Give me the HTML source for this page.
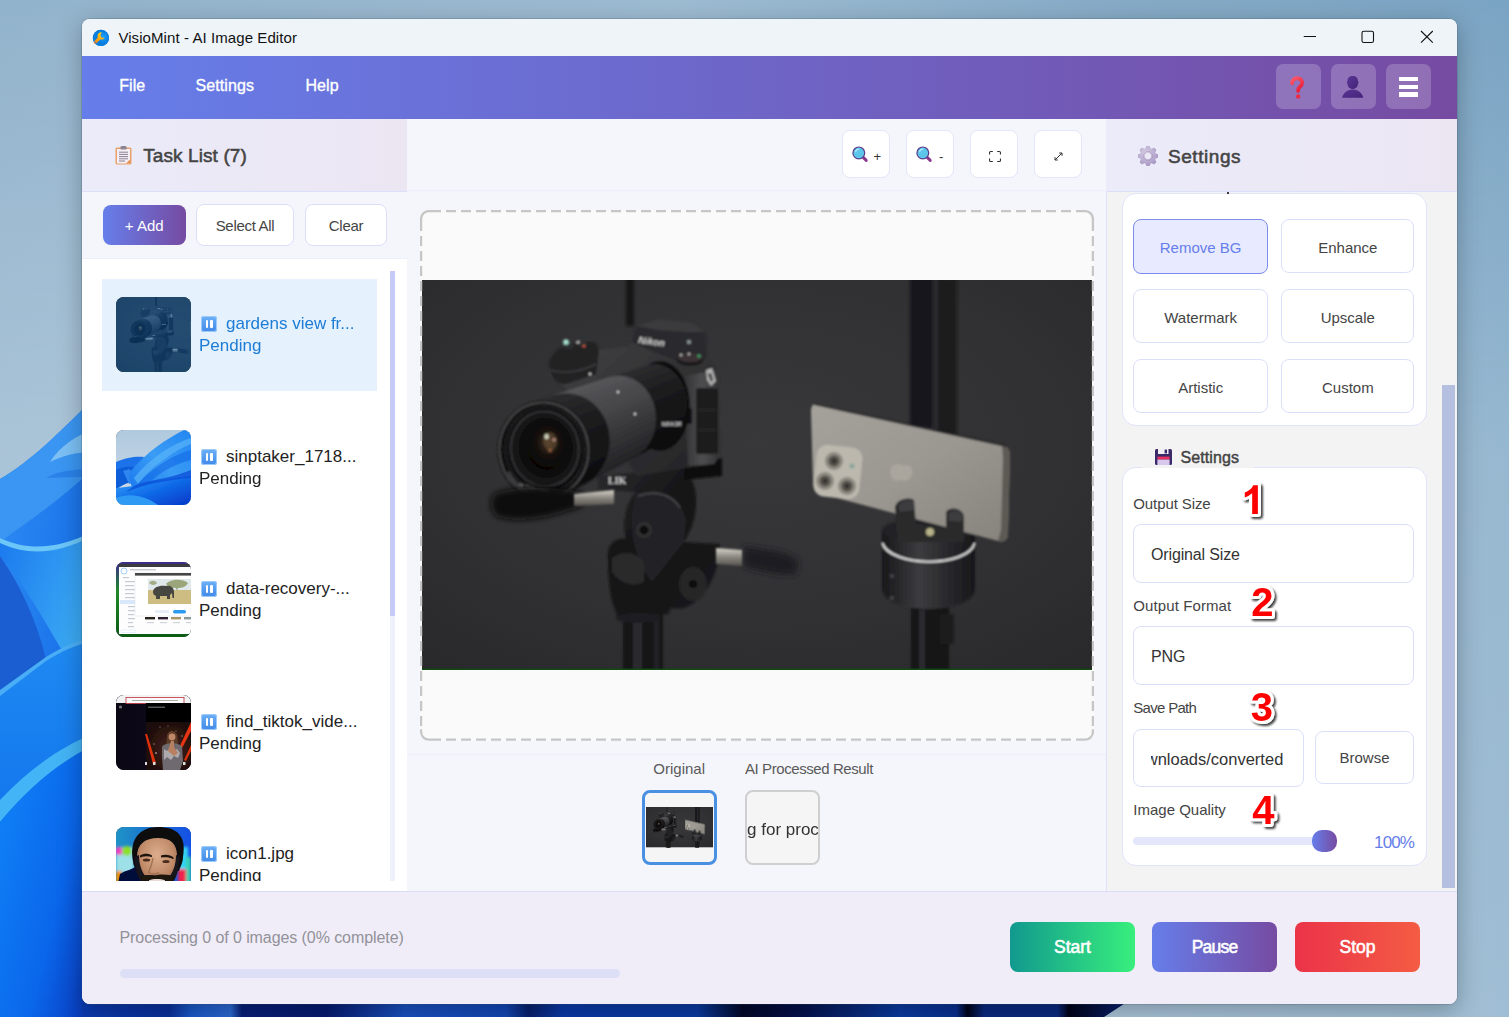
<!DOCTYPE html>
<html>
<head>
<meta charset="utf-8">
<title>VisioMint - AI Image Editor</title>
<style>
*{box-sizing:border-box;margin:0;padding:0}
html,body{width:1509px;height:1017px;overflow:hidden}
body{font-family:"Liberation Sans",sans-serif;position:relative;background:#8fb0c9;color:#222}
.abs{position:absolute}
#wall{position:absolute;left:0;top:0;width:1509px;height:1017px}
#win{position:absolute;left:82px;top:19px;width:1375px;height:985px;border-radius:8px;overflow:hidden;background:#f5f6fb;box-shadow:0 0 0 1px rgba(60,80,100,.22),0 6px 24px rgba(0,0,0,.28)}
/* coordinates inside #win are page coords minus (82,19) */
#title{position:absolute;left:0;top:0;width:1375px;height:37px;background:#eff4f9}
#title .txt{position:absolute;left:36.400px;top:10.300px;font-size:15px;line-height:17px;color:#111;white-space:nowrap;letter-spacing:0.080px}
#menu{position:absolute;left:0;top:37px;width:1375px;height:63px;background:linear-gradient(90deg,#667eea 0%,#764ba2 100%)}
#menu .mi{position:absolute;top:20.500px;font-size:16px;line-height:18px;color:#fff;white-space:nowrap;letter-spacing:0.100px;-webkit-text-stroke:0.350px #fff}
.mbtn{position:absolute;top:8px;width:45px;height:44.500px;border-radius:7px;background:rgba(255,255,255,.2)}
.hdr{position:absolute;top:100px;height:73px;background:linear-gradient(90deg,#ebebf9,#ece6f3);border-bottom:1px solid #dcdffa}
.hdr .ht{position:absolute;font-size:19px;line-height:21px;color:#444;white-space:nowrap;-webkit-text-stroke:0.550px #444}
#left{position:absolute;left:0;top:100px;width:325px;height:772px;background:#fff}
#center{position:absolute;left:325px;top:100px;width:699px;height:772px;background:#f5f6fb}
#right{position:absolute;left:1024px;top:100px;width:351px;height:772px;background:#f3f3f3}
#footer{position:absolute;left:0;top:872px;width:1375px;height:113px;background:#f0edf8;border-top:1px solid #d9dcf8}
.btn{position:absolute;border:1px solid #dcdffa;border-radius:8px;background:#fff;color:#444;font-size:15px;letter-spacing:-0.300px;text-align:center;white-space:nowrap}

#list{position:absolute;left:20px;top:152px;width:293px;height:610px;overflow:hidden}
#list .track{position:absolute;left:288px;top:0;width:5px;height:610px;background:#eef0fc}
#list .thumbbar{position:absolute;left:288px;top:0;width:5px;height:345px;background:#c5caf6}
.item{position:absolute;left:0;width:275px;height:111.5px}
.item.sel{background:#e5f1fc;color:#1c7cd6}
.item .th{position:absolute;left:14px;top:18px;width:75px;height:75px;border-radius:8px;background:#345;overflow:hidden}
.item .l1{position:absolute;left:97px;top:34px;font-size:17px;line-height:22px;white-space:nowrap;padding-left:27px}
.item .l2{position:absolute;left:97px;top:56px;font-size:17px;line-height:22px;white-space:nowrap}
.pz{position:absolute;left:2px;top:3px;width:16px;height:16px;border-radius:3px;background:linear-gradient(180deg,#6cb0f7,#4189e8);box-shadow:inset 0 0 0 1px #9ccaf9}
.pz:before,.pz:after{content:"";position:absolute;top:4px;width:2.5px;height:8px;background:#fff;border-radius:1px}
.pz:before{left:4.5px}.pz:after{left:9px}

.tb{position:absolute;top:11px;width:48px;height:48px;border:1px solid #e4e6fb;border-radius:8px;background:#fff}
.tb span{position:absolute;left:30.500px;top:17.500px;font-size:13px;color:#333;line-height:16px}
#canvas{position:absolute;left:13px;top:91px;width:674px;height:530.700px;border-radius:8.500px;background:#fafafa;overflow:hidden}
#photo{position:absolute;left:2px;top:70px;width:670px;height:390px;background:#2b2b2d}
.lab{position:absolute;font-size:15px;color:#5a5a5a;white-space:nowrap;line-height:17px}
#thA{left:235px;top:671px;width:75px;height:75px;border:3px solid #4a90e2;border-radius:8px;background:#f5f5f5;overflow:hidden}
#thB{left:338px;top:671px;width:75px;height:75px;border:2px solid #cfcfcf;border-radius:8px;background:#f5f5f5;overflow:hidden}
#thB span{position:absolute;left:-62.800px;top:26.500px;width:200px;text-align:center;font-size:17px;color:#333;white-space:nowrap;line-height:22px}
#rscroll{left:0;top:72px;width:351px;height:700px;overflow:hidden}
.gb{position:absolute;border:1px solid #e0e3fb;border-radius:14px;background:#fff}
.gt{position:absolute;height:22px;background:#f3f3f3}
.gtt{position:absolute;font-size:16px;color:#444;white-space:nowrap;line-height:18px;-webkit-text-stroke:0.450px #444;letter-spacing:0.100px}
.ob{position:absolute;width:134px;height:54px;border:1px solid #dcdffa;border-radius:8px;background:#fff;color:#444;font-size:15px;text-align:center;line-height:55px;white-space:nowrap}
.ob.sel{border:1.500px solid #7b8cec;background:#e8eaff;color:#667eea}
.fl{position:absolute;font-size:15px;color:#444;white-space:nowrap;line-height:17px}
.sel2{position:absolute;border:1px solid #dcdffa;border-radius:8px;background:#fff;overflow:hidden}
.sel2 span{position:absolute;left:17px;top:20.500px;font-size:16px;color:#333;white-space:nowrap;line-height:18px;letter-spacing:-0.150px}
.fb{position:absolute;top:30px;width:125px;height:50px;border-radius:8px;color:#fff;font-size:17.500px;letter-spacing:0;-webkit-text-stroke:0.550px #fff;text-align:center;line-height:50px}
</style>
</head>
<body>
<svg id="wall" width="1509" height="1017" viewBox="0 0 1509 1017">
  <defs>
    <linearGradient id="wg" x1="0" y1="0" x2="1" y2="0"><stop offset="0" stop-color="#92b3cc"/><stop offset="0.45" stop-color="#9dbcd2"/><stop offset="0.75" stop-color="#86abc7"/><stop offset="1" stop-color="#7aa4c3"/></linearGradient>
    <linearGradient id="wv" x1="0" y1="0" x2="0" y2="1"><stop offset="0" stop-color="#fff" stop-opacity="0"/><stop offset="0.45" stop-color="#fff" stop-opacity="0.22"/><stop offset="1" stop-color="#fff" stop-opacity="0.28"/></linearGradient>
    <linearGradient id="p1" x1="0" y1="0" x2="1" y2="1"><stop offset="0" stop-color="#2f8df5"/><stop offset="1" stop-color="#0a5fe0"/></linearGradient>
    <linearGradient id="p2" x1="0" y1="0" x2="1" y2="0.6"><stop offset="0" stop-color="#1a78ee"/><stop offset="1" stop-color="#3fb0f5"/></linearGradient>
    <linearGradient id="p3" x1="0" y1="0" x2="0" y2="1"><stop offset="0" stop-color="#1f8af2"/><stop offset="1" stop-color="#0560e8"/></linearGradient>
    <linearGradient id="p5" x1="0" y1="0.300" x2="1" y2="1"><stop offset="0" stop-color="#0f7ef5"/><stop offset="0.550" stop-color="#0a66ea"/><stop offset="0.800" stop-color="#0a4cd0"/><stop offset="1" stop-color="#0830a8"/></linearGradient>
    <linearGradient id="p4" gradientUnits="userSpaceOnUse" x1="0" y1="0" x2="1125" y2="0"><stop offset="0" stop-color="#0a84ff"/><stop offset="0.045" stop-color="#0a70f0"/><stop offset="0.071" stop-color="#0a3ab0"/><stop offset="0.150" stop-color="#0a2f9a"/><stop offset="0.170" stop-color="#1a58c8"/><stop offset="0.205" stop-color="#2a68d0"/><stop offset="0.215" stop-color="#081e78"/><stop offset="0.290" stop-color="#061a70"/><stop offset="0.360" stop-color="#1a50c0"/><stop offset="0.450" stop-color="#1246b4"/><stop offset="0.470" stop-color="#08206c"/><stop offset="0.500" stop-color="#0a3aa8"/><stop offset="0.620" stop-color="#0a3aa0"/><stop offset="0.660" stop-color="#03082a"/><stop offset="0.710" stop-color="#04104a"/><stop offset="0.800" stop-color="#0a3aa0"/><stop offset="0.850" stop-color="#0a2f90"/><stop offset="0.860" stop-color="#01031a"/><stop offset="0.875" stop-color="#0a2a80"/><stop offset="0.940" stop-color="#0a2a80"/><stop offset="0.950" stop-color="#01031a"/><stop offset="1" stop-color="#0a2070"/></linearGradient>
  </defs>
  <rect width="1509" height="1017" fill="url(#wg)"/>
  <rect width="1509" height="1017" fill="url(#wv)"/>
  <!-- bloom left -->
  <path d="M0 479 C30 462 60 432 92 400 L92 1017 L0 1017Z" fill="url(#p1)"/>
  <path d="M0 479 C30 462 60 432 92 400 L92 470 C60 500 30 520 0 542Z" fill="#3a96f2"/>
  <path d="M50 462 C60 446 76 436 92 430 L92 452 C76 452 62 456 50 462Z" fill="#7cc0f5"/>
  <path d="M46 478 C60 470 76 470 92 468 L92 478 C76 476 60 478 46 478Z" fill="#2a82ea"/>
  <path d="M0 538 C30 552 60 548 92 532 L92 700 C60 650 30 590 0 556Z" fill="url(#p2)"/>
  <path d="M0 538 C30 552 60 548 92 532 L92 536 C60 553 30 557 0 543Z" fill="#6cc6f8"/>
  <path d="M0 556 C20 584 38 624 46 660 L0 694Z" fill="#1a5ed2"/>
  <path d="M0 694 L46 660 C62 650 76 644 92 640 L92 1017 L0 1017Z" fill="url(#p3)"/>
  <path d="M0 690 L46 657 C62 647 76 641 92 637 L92 641 C76 645 62 651 46 661 L0 696Z" fill="#4aaef6"/>
  <path d="M0 800 C30 768 60 748 92 734 L92 746 C60 762 30 786 0 822Z" fill="#43b4f5"/>
  <path d="M0 822 C30 786 60 762 92 746 L92 1017 L0 1017Z" fill="url(#p5)"/>
  <!-- bottom strip -->
  <path d="M82 1000 L1130 1000 L1104 1017 L82 1017Z" fill="url(#p4)"/>
</svg>
<div id="win">
  <div id="title"><svg class="abs" style="left:10px;top:9.500px" width="18" height="18" viewBox="0 0 18 18"><defs><linearGradient id="wr" x1="0.700" y1="0" x2="0.200" y2="1"><stop offset="0" stop-color="#ffd21a"/><stop offset="0.600" stop-color="#ffa60a"/><stop offset="1" stop-color="#f57c1a"/></linearGradient><radialGradient id="ib" cx="0.650" cy="0.450" r="0.350"><stop offset="0" stop-color="#1fa2ff"/><stop offset="1" stop-color="#0a7fe0"/></radialGradient></defs><circle cx="8.900" cy="8.900" r="8.100" fill="#0a7fe0"/><circle cx="8.900" cy="8.900" r="8.100" fill="url(#ib)"/><path d="M9.400 3.200C7.300 3.200 5.500 4.900 5.500 7C5.500 7.600 5.700 8.200 5.900 8.600L2.300 12.200C1.700 12.800 1.700 13.700 2.300 14.300C2.900 14.900 3.800 14.900 4.400 14.300L8.300 10.400C8.700 10.500 9 10.600 9.400 10.600C10.800 10.600 11.900 9.900 12.400 8.900L9.700 8.600L8.400 6.600L9.800 3.300C9.700 3.200 9.500 3.200 9.400 3.200Z" fill="url(#wr)"/><circle cx="3.400" cy="13.200" r="0.800" fill="#5b7fa8"/></svg><span class="txt">VisioMint - AI Image Editor</span>
    <svg class="abs" style="left:1215px;top:5px" width="150" height="26" viewBox="0 0 150 26" fill="none" stroke="#111" stroke-width="1.100"><path d="M6.700 12.500H19"/><rect x="65" y="7.200" width="11.500" height="11.300" rx="1.800"/><path d="M124 7L135.800 18.700M135.800 7L124 18.700"/></svg></div>
  <div id="menu">
    <span class="mi" style="left:37.200px">File</span>
    <span class="mi" style="left:113.500px">Settings</span>
    <span class="mi" style="left:223.400px">Help</span>
    <div class="mbtn" style="left:1194px"><svg class="abs" style="left:13px;top:11.600px" width="17" height="23.500" viewBox="0 0 18 24" preserveAspectRatio="none"><defs><linearGradient id="qg" x1="0" y1="0" x2="0.600" y2="1"><stop offset="0" stop-color="#ff5a6a"/><stop offset="1" stop-color="#e8203c"/></linearGradient></defs><path d="M3.200 7.500C3.200 4.200 5.600 2.300 8.600 2.300C11.700 2.300 13.900 4.200 13.900 7C13.900 9.200 12.700 10.300 11.400 11.300C10.300 12.200 9.700 12.800 9.700 14.300V15.200" fill="none" stroke="url(#qg)" stroke-width="3.900" stroke-linecap="round" stroke-linejoin="round"/><circle cx="9.700" cy="21" r="2.300" fill="#ee2b45"/></svg></div>
    <div class="mbtn" style="left:1249px"><svg class="abs" style="left:10px;top:10.200px" width="24" height="24" viewBox="0 0 24 24"><defs><linearGradient id="ug" x1="0" y1="0" x2="1" y2="1"><stop offset="0" stop-color="#5a3596"/><stop offset="1" stop-color="#432478"/></linearGradient></defs><path d="M6.400 7.500C6.400 3.800 8.600 2 11.700 2C14.800 2 17 3.800 17 7.500C17.700 7.600 17.900 8.800 17 9.500C16.800 12.700 14.800 15 11.700 15C8.600 15 6.600 12.700 6.400 9.500C5.500 8.800 5.700 7.600 6.400 7.500Z" fill="url(#ug)"/><path d="M1 23.700C2.600 18.700 6.600 15.600 11.700 15.600C16.800 15.600 20.800 18.700 22.400 23.700Z" fill="url(#ug)"/></svg></div>
    <div class="mbtn" style="left:1304px"><div class="abs" style="left:13px;top:13px;width:19px;height:4.200px;background:#fff"></div><div class="abs" style="left:13px;top:20.800px;width:19px;height:4.200px;background:#fff"></div><div class="abs" style="left:13px;top:28.200px;width:19px;height:4.700px;background:#fff"></div></div>
  </div>
  <div id="left">
    <div class="hdr" style="left:0;top:0;width:325px">
      <svg class="abs" style="left:33px;top:27px" width="17" height="19" viewBox="0 0 17 19"><rect x="0.5" y="1.5" width="16" height="17" rx="1.5" fill="#e9a16c"/><rect x="2" y="3" width="13" height="14.5" fill="#f4eef6"/><path d="M15 13.5v4h-4z" fill="#e58f4e"/><rect x="5.5" y="0" width="6" height="3.6" rx="1.2" fill="#8d8492"/><path d="M4 6.2h9M4 8.4h9M4 10.6h9M4 12.8h9M4 15h6" stroke="#8a8290" stroke-width="1"/></svg>
      <span class="ht" style="left:61.200px;top:26.200px;letter-spacing:0.100px">Task List (7)</span>
    </div>
    <div class="abs" style="left:0;top:73px;width:325px;height:67px;background:#f5f6fb;border-bottom:1px solid #eceefa">
      <div class="btn" style="left:20.500px;top:13px;width:83.500px;height:40px;border:none;background:linear-gradient(90deg,#667eea,#764ba2);color:#fff;line-height:42px;letter-spacing:0">+ Add</div>
      <div class="btn" style="left:114px;top:12px;width:98px;height:42px;line-height:42px">Select All</div>
      <div class="btn" style="left:223px;top:12px;width:82px;height:42px;line-height:42px">Clear</div>
    </div>
    <div id="list">
      <div class="track"></div><div class="thumbbar"></div>
      <div class="item sel" style="top:8px"><div class="th t1"><svg width="75" height="75" viewBox="0 0 390 390"><use href="#photosvg" x="0" y="0"/><rect width="390" height="390" fill="#0869c3" opacity="0.4"/></svg></div><div class="l1"><i class="pz"></i>gardens view fr...</div><div class="l2">Pending</div></div>
      <div class="item" style="top:140.5px"><div class="th t2"><svg width="75" height="75" viewBox="0 0 75 75"><defs><linearGradient id="t2a" x1="0" y1="0" x2="0" y2="1"><stop offset="0" stop-color="#b0c9de"/><stop offset="1" stop-color="#cfdde8"/></linearGradient><linearGradient id="t2b" x1="0" y1="1" x2="1" y2="0"><stop offset="0" stop-color="#1a78ee"/><stop offset="0.5" stop-color="#3a9cf5"/><stop offset="1" stop-color="#2386f2"/></linearGradient><linearGradient id="t2c" x1="0" y1="0" x2="1" y2="1"><stop offset="0" stop-color="#3aa8f6"/><stop offset="0.45" stop-color="#1372ec"/><stop offset="1" stop-color="#0338c8"/></linearGradient><filter id="t2f"><feGaussianBlur stdDeviation="0.600"/></filter></defs>
<rect width="75" height="75" fill="url(#t2a)"/>
<g filter="url(#t2f)">
<path d="M0 32 C10 27 22 26 28 27 L20 45 L0 60Z" fill="#1a72e8"/>
<path d="M0 40 C8 36 16 36 22 38 L14 52 L0 58Z" fill="#0f5bd8"/>
<path d="M7 41 L14 39 L18 52 L13 54Z" fill="#2f86ee"/>
<path d="M14 42 C30 22 52 8 68 0 L75 0 L75 60 L20 62 C14 56 12 48 14 42Z" fill="url(#t2b)"/>
<path d="M18 48 C34 28 56 14 75 8 L75 14 C56 22 36 36 22 54Z" fill="#58b4f8" opacity="0.700"/>
<path d="M20 56 C40 34 60 24 75 20 L75 30 C58 34 40 44 26 60Z" fill="#1268e6" opacity="0.600"/>
<path d="M0 58 C20 57 40 50 75 46 L75 75 L0 75Z" fill="url(#t2c)"/>
<path d="M0 68 C14 62 30 66 42 75 L0 75Z" fill="#2f9af4"/>
<path d="M18 56 C30 50 50 50 75 40 L75 48 C50 50 30 54 10 62Z" fill="#0a50d8" opacity="0.800"/>
</g></svg></div><div class="l1"><i class="pz"></i>sinptaker_1718...</div><div class="l2">Pending</div></div>
      <div class="item" style="top:273px"><div class="th t3"><svg width="75" height="75" viewBox="0 0 75 75"><defs><linearGradient id="t3a" x1="0" y1="0" x2="0" y2="1"><stop offset="0" stop-color="#3b2a8a"/><stop offset="0.4" stop-color="#1f8a2a"/><stop offset="1" stop-color="#0c5a14"/></linearGradient><filter id="t3f"><feGaussianBlur stdDeviation="0.500"/></filter></defs>
<rect width="75" height="75" fill="url(#t3a)"/>
<g filter="url(#t3f)">
<rect x="3" y="2" width="72" height="70" fill="#fdfdfe"/>
<rect x="3" y="2" width="72" height="3" fill="#3a3a3c"/>
<circle cx="8" cy="9" r="3" fill="none" stroke="#8fc4f2" stroke-width="0.800"/>
<rect x="14" y="7" width="26" height="1.500" fill="#c9ccd2"/>
<rect x="4" y="38" width="18" height="4" fill="#d9e9fb"/>
<g fill="#c6cad2"><rect x="7" y="15" width="6" height="1.200"/><rect x="9" y="19" width="10" height="1.200"/><rect x="9" y="23" width="9" height="1.200"/><rect x="9" y="27" width="10" height="1.200"/><rect x="9" y="31" width="9" height="1.200"/><rect x="9" y="35" width="10" height="1.200"/><rect x="12" y="44" width="7" height="1.200"/><rect x="12" y="48" width="7" height="1.200"/><rect x="12" y="52" width="6" height="1.200"/><rect x="12" y="56" width="7" height="1.200"/><rect x="12" y="60" width="5" height="1.200"/><rect x="12" y="64" width="6" height="1.200"/></g>
<rect x="19" y="11" width="56" height="43" fill="#fff" stroke="#ddd" stroke-width="0.400"/>
<rect x="19" y="11" width="56" height="2.600" fill="#444446"/>
<rect x="32" y="17" width="43" height="12" fill="#dfe8ea"/>
<rect x="32" y="28" width="43" height="14" fill="#cdbd82"/>
<path d="M50 22 C54 17 66 16 72 21 C70 25 66 26 62 26 L61 29 L60 26 C56 26 52 25 50 22Z" fill="#9aa57a"/>
<path d="M33 21 C35 18 39 18 41 21 C40 23 36 24 33 21Z" fill="#a3ad84"/>
<path d="M37 30 C37 25 44 23 50 24 C55 23 58 26 58 30 L58 36 L56.500 36 L56 31 L54 33 L54 37 L51 37 L51 34 L44 34 L44 37 L40 37 L40 34 C38 33 37 32 37 30Z" fill="#45463f"/>
<rect x="29" y="55" width="10" height="2.400" fill="#2a221a"/><rect x="42" y="55" width="10" height="2.400" fill="#2d2030"/><rect x="55" y="55" width="10" height="2.400" fill="#a89868"/><rect x="68" y="55" width="7" height="2.400" fill="#8a9a98"/>
<g fill="#d0d4da"><rect x="31" y="60" width="7" height="1.200"/><rect x="44" y="60" width="7" height="1.200"/><rect x="57" y="60" width="7" height="1.200"/><rect x="70" y="60" width="5" height="1.200"/></g>
<rect x="39" y="48" width="14" height="3" fill="#e8eef8"/>
<rect x="57" y="48" width="13" height="3.400" rx="1.700" fill="#2b9bf0"/>
<rect x="5" y="68" width="15" height="2.500" rx="1" fill="#fff" stroke="#bfe0fb" stroke-width="0.400"/>
</g></svg></div><div class="l1"><i class="pz"></i>data-recovery-...</div><div class="l2">Pending</div></div>
      <div class="item" style="top:405.5px"><div class="th t4"><svg width="75" height="75" viewBox="0 0 75 75"><defs><linearGradient id="t4a" x1="0" y1="0" x2="1" y2="0"><stop offset="0" stop-color="#0b0714"/><stop offset="1" stop-color="#0d0a1e"/></linearGradient><radialGradient id="t4b" cx="0.55" cy="0.55" r="0.600"><stop offset="0" stop-color="#4a241c"/><stop offset="1" stop-color="#1c0c0a"/></radialGradient><filter id="t4f"><feGaussianBlur stdDeviation="0.600"/></filter></defs>
<rect width="75" height="75" fill="url(#t4a)"/>
<g filter="url(#t4f)">
<rect x="0" y="0" width="75" height="8" fill="#f2f2f2"/>
<rect x="10" y="2.500" width="58" height="6" fill="#fafafa" stroke="#c0303a" stroke-width="0.800"/>
<rect x="16" y="5" width="46" height="0.800" fill="#999"/>
<rect x="30" y="8" width="45" height="20" fill="#020202"/>
<rect x="32" y="11.500" width="17" height="1.500" fill="#55555a"/>
<circle cx="4.500" cy="12" r="1.600" fill="#777"/>
<rect x="30" y="27" width="45" height="48" fill="url(#t4b)"/>
<path d="M29 39 L31 39 L40 68 L37 69Z" fill="#e03010"/>
<path d="M75 27 L75 36 L65 55 L63 53Z" fill="#e83412"/>
<path d="M75 50 L75 56 L70 66 L68 65Z" fill="#d83010"/>
<circle cx="56" cy="41" r="4.500" fill="#b07858"/>
<path d="M51 42 C50 36 62 35 61.500 42 L62 50 L50 50Z" fill="#5a3a28"/>
<circle cx="56" cy="42" r="3.400" fill="#c08868"/>
<path d="M46 52 C48 47 64 47 66 52 L67 66 L64 75 L47 75 L46 62Z" fill="#6e6a70"/>
<path d="M48 54 l3 2 l3-3 l3 4 l4-3 l3 4 l-2 5 l-4-2 l-3 4 l-4-3 l-3 3z" fill="#c9c4c8" opacity="0.700"/>
<path d="M55 46 L58 46 L58 52 L62 58 L58 61 L52 56Z" fill="#b88060"/>
<rect x="29" y="67" width="2" height="3" fill="#ddd"/><rect x="37" y="67" width="2.500" height="3" fill="#ddd"/><rect x="67" y="67" width="2.500" height="3" fill="#ddd"/>
<g fill="#cfcfd4" opacity="0.700"><circle cx="40" cy="58" r="0.900"/><circle cx="38" cy="49" r="0.700"/><circle cx="44" cy="32" r="0.600"/><circle cx="60" cy="36" r="0.600"/><circle cx="66" cy="41" r="0.700"/><circle cx="52" cy="31" r="0.500"/></g>
</g></svg></div><div class="l1"><i class="pz"></i>find_tiktok_vide...</div><div class="l2">Pending</div></div>
      <div class="item" style="top:538px"><div class="th t5"><svg width="75" height="75" viewBox="0 0 75 75"><defs><linearGradient id="t5a" x1="0" y1="0" x2="1" y2="0"><stop offset="0" stop-color="#1f93c6"/><stop offset="0.500" stop-color="#1a6fd0"/><stop offset="1" stop-color="#1450e6"/></linearGradient><radialGradient id="t5s" cx="0.500" cy="0.350" r="0.700"><stop offset="0" stop-color="#dcae8e"/><stop offset="0.600" stop-color="#c08a68"/><stop offset="1" stop-color="#8a5a40"/></radialGradient><filter id="t5f"><feGaussianBlur stdDeviation="0.700"/></filter><filter id="t5g"><feGaussianBlur stdDeviation="1.600"/></filter></defs>
<rect width="75" height="75" fill="url(#t5a)"/>
<g filter="url(#t5g)"><rect x="0" y="20" width="18" height="26" fill="#9ee0e8"/><circle cx="3" cy="24" r="4" fill="#f03cc0"/><circle cx="11" cy="24" r="5" fill="#8be020"/><rect x="0" y="44" width="6" height="14" fill="#f59000"/><rect x="62" y="20" width="10" height="22" fill="#34d4f4"/><rect x="62" y="42" width="9" height="14" fill="#f0204c"/><rect x="70" y="30" width="5" height="26" fill="#38d0b0"/></g>
<g filter="url(#t5f)">
<path d="M2 56 L4 47 C10 43 16 43 22 38 L26 56Z" fill="#060b3a"/>
<path d="M17 34 C13 12 24 0 42 0 C60 0 71 8 67 30 C67 36 64 40 63 44 L20 44 C19 40 17 38 17 34Z" fill="#0d0d11"/>
<path d="M21 30 C21 17 29 11 42 11 C55 11 62 17 61 32 C61 46 56 58 42 60 C28 60 21 46 21 30Z" fill="url(#t5s)"/>
<path d="M18 30 C19 42 22 52 27 57 L30 50 C25 44 23 36 23 28Z" fill="#17121a"/>
<path d="M64 30 C63 42 61 50 56 57 L53 50 C58 44 60 36 60 28Z" fill="#17121a"/>
<path d="M24 28.500 C28 26 33 26.500 36 28.500 L36 30 C32 29 28 29 24 30.500Z" fill="#1a1210"/>
<path d="M45 28.500 C49 27 55 28 58 31 L57 32 C54 30 49 30 45 30.500Z" fill="#1a1210"/>
<ellipse cx="30.500" cy="33" rx="3.600" ry="1.500" fill="#4a2c1c"/><ellipse cx="50" cy="34.500" rx="3.600" ry="1.500" fill="#4a2c1c"/>
<path d="M37 31 C36 38 34 42 32.500 45.500 C35 47.500 41 47.500 43 45.500" fill="none" stroke="#a06e50" stroke-width="1.300"/>
<path d="M25 50 C30 46.500 37 49 41 48 C47 47 54 47.500 58 50 L57 60 L26 60Z" fill="#1a1210"/>
<path d="M33 53.200 C37 51.500 45 51.500 49 53.200 L49 56 L33 56Z" fill="#eadcd4"/>
</g></svg></div><div class="l1"><i class="pz"></i>icon1.jpg</div><div class="l2">Pending</div></div>
    </div>
  </div>
  <div id="center">
    <div class="abs" style="left:0;top:0;width:699px;height:72px;border-bottom:1px solid #eceefa"></div>
    <div class="tb" style="left:435px"><svg class="abs" style="left:6.800px;top:13.400px" width="20" height="20" viewBox="0 0 20 20"><path d="M12.200 12.400L16.200 16.400" stroke="#8a3a8c" stroke-width="3" stroke-linecap="round"/><circle cx="8.800" cy="8.900" r="5.900" fill="#5cc6ea" stroke="#5a3a8a" stroke-width="1.200"/><path d="M5.600 7.600A3.600 3.600 0 0 1 8.600 5.200" fill="none" stroke="#b8ecfa" stroke-width="1.200" stroke-linecap="round"/></svg><span>+</span></div>
    <div class="tb" style="left:499px"><svg class="abs" style="left:6.800px;top:13.400px" width="20" height="20" viewBox="0 0 20 20"><path d="M12.200 12.400L16.200 16.400" stroke="#8a3a8c" stroke-width="3" stroke-linecap="round"/><circle cx="8.800" cy="8.900" r="5.900" fill="#5cc6ea" stroke="#5a3a8a" stroke-width="1.200"/><path d="M5.600 7.600A3.600 3.600 0 0 1 8.600 5.200" fill="none" stroke="#b8ecfa" stroke-width="1.200" stroke-linecap="round"/></svg><span style="left:32px">-</span></div>
    <div class="tb" style="left:563px"><svg class="abs" style="left:17.500px;top:19.500px" width="12" height="11" viewBox="0 0 11 11" preserveAspectRatio="none"><path d="M0.5 3.5v-2a1 1 0 0 1 1-1h2M7.500.5h2a1 1 0 0 1 1 1v2M10.5 7.500v2a1 1 0 0 1-1 1h-2M3.500 10.500h-2a1 1 0 0 1-1-1v-2" fill="none" stroke="#333" stroke-width="1"/></svg></div>
    <div class="tb" style="left:627px"><svg class="abs" style="left:18.500px;top:21px" width="9" height="9" viewBox="0 0 9 9"><path d="M1 8L8 1M5.200 1H8v2.800M1 5.200V8h2.800" fill="none" stroke="#333" stroke-width="1"/></svg></div>
    <div id="canvas">
      <div id="photo"><svg id="photosvg" width="670" height="390" viewBox="0 0 670 390" preserveAspectRatio="none">
<defs>
<radialGradient id="bg1" cx="0.5" cy="0.42" r="0.8"><stop offset="0" stop-color="#38383a"/><stop offset="0.55" stop-color="#313133"/><stop offset="1" stop-color="#28282a"/></radialGradient>
<linearGradient id="ph" x1="0" y1="0" x2="1" y2="1"><stop offset="0" stop-color="#a5a29c"/><stop offset="0.5" stop-color="#9b9791"/><stop offset="1" stop-color="#86827c"/></linearGradient>
<linearGradient id="body" x1="0" y1="0" x2="1" y2="1"><stop offset="0" stop-color="#454547"/><stop offset="1" stop-color="#222224"/></linearGradient>
<linearGradient id="grip" x1="0" y1="0" x2="1" y2="0"><stop offset="0" stop-color="#333335"/><stop offset="0.5" stop-color="#4e4e50"/><stop offset="1" stop-color="#303032"/></linearGradient>
<radialGradient id="glass" cx="0.55" cy="0.42" r="0.6"><stop offset="0" stop-color="#4a3826"/><stop offset="0.45" stop-color="#17120e"/><stop offset="1" stop-color="#040404"/></radialGradient>
<linearGradient id="gim" x1="0" y1="0" x2="1" y2="0"><stop offset="0" stop-color="#18181a"/><stop offset="0.4" stop-color="#3c3c3f"/><stop offset="1" stop-color="#17171a"/></linearGradient>
<linearGradient id="rod" x1="0" y1="0" x2="0" y2="1"><stop offset="0" stop-color="#d8d5cc"/><stop offset="0.5" stop-color="#8a8780"/><stop offset="1" stop-color="#55534e"/></linearGradient>
<linearGradient id="ring" x1="0.3" y1="0" x2="0.7" y2="1"><stop offset="0" stop-color="#58585a"/><stop offset="0.4" stop-color="#454547"/><stop offset="1" stop-color="#202022"/></linearGradient>
<linearGradient id="dark" x1="0.3" y1="0" x2="0.7" y2="1"><stop offset="0" stop-color="#303032"/><stop offset="0.4" stop-color="#1c1c1d"/><stop offset="1" stop-color="#0c0c0d"/></linearGradient>
<linearGradient id="head" x1="0" y1="0" x2="1" y2="1"><stop offset="0" stop-color="#2a2a2c"/><stop offset="0.5" stop-color="#121213"/><stop offset="1" stop-color="#1c1c1e"/></linearGradient>
<filter id="b1" x="-10%" y="-10%" width="120%" height="120%"><feGaussianBlur stdDeviation="0.9"/></filter>
<filter id="b3" x="-20%" y="-20%" width="140%" height="140%"><feGaussianBlur stdDeviation="3"/></filter>
<filter id="b2" x="-20%" y="-20%" width="140%" height="140%"><feGaussianBlur stdDeviation="1.5"/></filter>
</defs>
<rect width="670" height="390" fill="url(#bg1)"/>
<g filter="url(#b2)"><rect x="204" y="-2" width="8" height="48" fill="#151516"/><rect x="488" y="-2" width="23" height="150" fill="#18181a"/><rect x="516" y="-2" width="19" height="165" fill="#1b1b1d"/><rect x="511" y="-2" width="5" height="160" fill="#2c2c2f"/></g>
<g filter="url(#b1)">
<rect x="201" y="328" width="40" height="66" fill="#141415"/><rect x="211" y="338" width="9" height="56" fill="#2b2b2d"/><rect x="232" y="330" width="5" height="64" fill="#232325"/>
<path d="M186 280C184 262 196 256 208 260L252 262L264 300L246 334L196 336C188 322 186 300 186 280Z" fill="#151516"/>
<path d="M176 196L262 188C274 200 278 222 270 246L262 262L298 264C298 292 284 320 262 328C248 332 236 322 228 300L204 262C200 240 204 222 214 212L176 210Z" fill="url(#head)"/>
<path d="M214 214C236 206 258 214 264 240L262 262L230 302C214 282 204 250 214 214Z" fill="#232325"/>
<path d="M216 216C232 210 250 214 258 228" fill="none" stroke="#4a4a4d" stroke-width="1.5"/>
<circle cx="222" cy="250" r="8" fill="#303032"/><circle cx="222" cy="250" r="4.5" fill="#0b0b0c"/>
<ellipse cx="271" cy="304" rx="14" ry="17" fill="#262628"/><circle cx="271" cy="304" r="4" fill="#0a0a0b"/>
<path d="M190 278C200 270 214 272 222 282L222 302C210 308 196 302 190 292Z" fill="#29292b"/>
<ellipse cx="216" cy="338" rx="22" ry="5" fill="#1f1f21"/>
<path d="M222 176L266 172L266 184L222 188Z" fill="#5a4836"/><path d="M262 182L300 178L300 196L262 200Z" fill="#101011"/>
<path d="M127 84C127 74 136 68 148 64L170 60L178 70L208 66L209 60L214 46L236 39L270 43L284 52L285 78L296 90L299 174L292 184L262 188L215 196L180 150L140 104L128 96Z" fill="url(#body)"/>
<path d="M127 84C127 74 136 68 148 64L168 61C176 62 178 68 176 78L174 94L144 104C134 104 127 96 127 84Z" fill="#202022"/>
<path d="M128 90C140 94 160 92 174 84" fill="none" stroke="#3e3e40" stroke-width="1.5"/>
<ellipse cx="146" cy="66" rx="6" ry="3.500" fill="#2f2f31"/><ellipse cx="160" cy="64" rx="5" ry="3" fill="#2f2f31"/>
<circle cx="144" cy="62" r="2.800" fill="#a6e0cf"/><circle cx="156" cy="62" r="1.600" fill="#c7c7c7"/><circle cx="162" cy="66" r="1.500" fill="#c8553a"/>
<path d="M209 62L214 46L236 39L270 43L284 52L285 78L264 84L232 72Z" fill="#2b2b2d"/>
<path d="M214 46L236 39L270 43L284 52L262 52L236 50Z" fill="#3a3a3c"/>
<text x="216" y="63" font-family="Liberation Sans" font-weight="bold" font-style="italic" font-size="9.500" fill="#d4d4d4" transform="rotate(8 216 63)">Nikon</text>
<circle cx="267" cy="62" r="2" fill="#8f9a96"/>
<ellipse cx="268" cy="80" rx="13" ry="5.500" fill="#141415"/><ellipse cx="268" cy="78" rx="12" ry="4.500" fill="#3a3236"/>
<circle cx="259" cy="75" r="1.300" fill="#b9b9b9"/><circle cx="267" cy="74" r="1.300" fill="#b9b9b9"/><circle cx="277" cy="76" r="1.800" fill="#3f9a62"/>
<path d="M262 96L296 90L299 174L292 184L266 186Z" fill="url(#grip)"/>
<rect x="274" y="108" width="22" height="66" rx="3" fill="#1c1c1e"/><path d="M276 130h18M276 150h18" stroke="#2e2e30" stroke-width="1"/>
<path d="M284 90l6-2l4 13l-5 5l-4-6z" fill="#b0b0b0"/><path d="M286 94l3-1l2 7l-2 2z" fill="#3a3a3c"/>
<rect x="262" y="128" width="8" height="16" rx="2" fill="#111112"/>
<ellipse cx="238" cy="126" rx="30" ry="45" fill="#0f0f10"/>
<ellipse cx="232.0" cy="124.0" rx="33.0" ry="40.0" fill="url(#dark)"/>
<ellipse cx="228.5" cy="125.5" rx="33.4" ry="40.3" fill="url(#dark)"/>
<ellipse cx="225.0" cy="126.9" rx="33.9" ry="40.6" fill="url(#dark)"/>
<ellipse cx="221.4" cy="128.4" rx="34.3" ry="40.9" fill="url(#dark)"/>
<ellipse cx="217.9" cy="129.9" rx="34.7" ry="41.2" fill="url(#dark)"/>
<ellipse cx="214.4" cy="131.4" rx="35.2" ry="41.5" fill="url(#dark)"/>
<ellipse cx="210.9" cy="132.8" rx="35.6" ry="41.8" fill="url(#dark)"/>
<ellipse cx="207.4" cy="134.3" rx="36.0" ry="42.1" fill="url(#dark)"/>
<ellipse cx="203.8" cy="135.8" rx="36.5" ry="42.4" fill="url(#dark)"/>
<ellipse cx="200.3" cy="137.2" rx="36.9" ry="42.7" fill="url(#dark)"/>
<ellipse cx="196.8" cy="138.7" rx="37.3" ry="43.0" fill="url(#dark)"/>
<ellipse cx="196.8" cy="138.7" rx="37.3" ry="43.0" fill="url(#ring)"/>
<ellipse cx="193.5" cy="140.1" rx="37.7" ry="43.3" fill="url(#ring)"/>
<ellipse cx="190.2" cy="141.5" rx="38.1" ry="43.6" fill="url(#ring)"/>
<ellipse cx="186.9" cy="142.9" rx="38.5" ry="43.9" fill="url(#ring)"/>
<ellipse cx="183.6" cy="144.2" rx="38.9" ry="44.2" fill="url(#ring)"/>
<ellipse cx="180.3" cy="145.6" rx="39.3" ry="44.5" fill="url(#ring)"/>
<ellipse cx="177.0" cy="147.0" rx="39.8" ry="44.8" fill="url(#ring)"/>
<ellipse cx="173.7" cy="148.4" rx="40.2" ry="45.0" fill="url(#ring)"/>
<ellipse cx="170.4" cy="149.8" rx="40.6" ry="45.3" fill="url(#ring)"/>
<ellipse cx="167.1" cy="151.1" rx="41.0" ry="45.6" fill="url(#ring)"/>
<ellipse cx="163.8" cy="152.5" rx="41.4" ry="45.9" fill="url(#ring)"/>
<ellipse cx="160.5" cy="153.9" rx="41.8" ry="46.2" fill="url(#ring)"/>
<ellipse cx="157.2" cy="155.3" rx="42.2" ry="46.5" fill="url(#ring)"/>
<ellipse cx="153.9" cy="156.7" rx="42.6" ry="46.7" fill="url(#ring)"/>
<ellipse cx="150.6" cy="158.0" rx="43.0" ry="47.0" fill="url(#ring)"/>
<ellipse cx="147.3" cy="159.4" rx="43.4" ry="47.3" fill="url(#ring)"/>
<ellipse cx="144.0" cy="160.8" rx="43.8" ry="47.6" fill="url(#ring)"/>
<ellipse cx="144.0" cy="160.8" rx="43.8" ry="47.6" fill="url(#dark)"/>
<ellipse cx="141.2" cy="161.9" rx="44.1" ry="47.8" fill="url(#dark)"/>
<ellipse cx="138.5" cy="163.1" rx="44.5" ry="48.1" fill="url(#dark)"/>
<ellipse cx="135.8" cy="164.2" rx="44.8" ry="48.3" fill="url(#dark)"/>
<ellipse cx="133.0" cy="165.4" rx="45.1" ry="48.5" fill="url(#dark)"/>
<ellipse cx="130.2" cy="166.6" rx="45.5" ry="48.8" fill="url(#dark)"/>
<ellipse cx="127.5" cy="167.7" rx="45.8" ry="49.0" fill="url(#dark)"/>
<ellipse cx="124.8" cy="168.8" rx="46.2" ry="49.3" fill="url(#dark)"/>
<ellipse cx="122.0" cy="170.0" rx="46.5" ry="49.5" fill="url(#dark)"/>
<text x="240" y="146" font-family="Liberation Sans" font-weight="bold" font-size="5" fill="#ddd">NIKKOR</text>
<circle cx="168" cy="94" r="1.200" fill="#ddd"/><circle cx="196" cy="112" r="1.200" fill="#ddd"/><circle cx="213" cy="134" r="1.200" fill="#ddd"/><circle cx="118" cy="122" r="1" fill="#bbb"/>
<g transform="translate(122 170) rotate(-6)">
<ellipse cx="0" cy="0" rx="46.5" ry="49.5" fill="#0c0c0d"/>
<ellipse cx="0" cy="0" rx="44.5" ry="47.5" fill="none" stroke="#48484a" stroke-width="2"/>
<ellipse cx="1" cy="-0.5" rx="39.5" ry="43" fill="none" stroke="#1c1c1d" stroke-width="3"/>
<ellipse cx="1" cy="-1" rx="36" ry="39.5" fill="#161617"/>
<ellipse cx="1" cy="-1" rx="34" ry="37.5" fill="none" stroke="#3a3a3c" stroke-width="1.500"/>
<ellipse cx="2" cy="-2" rx="27" ry="30" fill="#090909"/>
<ellipse cx="3" cy="-3" rx="20" ry="23" fill="url(#glass)"/>
<ellipse cx="7" cy="-8" rx="7" ry="9" fill="#6b5238" opacity="0.55"/>
<ellipse cx="4" cy="-13" rx="2.200" ry="2.600" fill="#e6f0d8" opacity="0.85"/><ellipse cx="11" cy="-9" rx="1.600" ry="1.600" fill="#d8a898" opacity="0.8"/><ellipse cx="6" cy="1" rx="1.800" ry="1.500" fill="#c87858" opacity="0.7"/>
<path d="M-38 18A42 46 0 0 0 10 45" fill="none" stroke="#5a5a5c" stroke-width="2.500" opacity="0.7"/>
</g>
<text x="96" y="206" font-family="Liberation Sans" font-size="4.500" fill="#bdbdbd" transform="rotate(14 96 206)">28-75mm 1:2.8</text>
<text x="186" y="204" font-family="Liberation Serif" font-weight="bold" font-size="10" fill="#cfcfcf">LIK</text>
</g>
<g filter="url(#b3)"><path d="M72 214C90 206 130 206 160 212L160 226C130 238 92 244 74 236C68 230 68 220 72 214Z" fill="#0f0f10"/><path d="M322 266L345 270C362 272 372 276 376 282L374 294C360 296 340 292 322 286Z" fill="#1e1e20"/></g>
<g filter="url(#b1)">
<path d="M152 214L192 210L192 224L152 226Z" fill="url(#rod)"/><path d="M294 268L320 270L320 286L294 284Z" fill="url(#rod)"/>
<rect x="489" y="326" width="38" height="68" fill="#141416"/><rect x="497" y="330" width="6" height="64" fill="#2a2a2d"/><rect x="518" y="334" width="14" height="30" rx="2" fill="#1d1d1f"/>
<path d="M460 250C460 240 553 240 553 250L553 308C553 336 460 336 460 308Z" fill="url(#gim)"/>
<path d="M460 263C470 288 545 288 553 263" fill="none" stroke="#dcdcdc" stroke-width="2.200"/>
<ellipse cx="506" cy="250" rx="46" ry="12" fill="#242426"/>
<circle cx="470" cy="296" r="2" fill="#47474a"/><circle cx="470" cy="318" r="2" fill="#47474a"/>
<path d="M396 124L580 165C586 167 588 170 588 176L586 254C586 260 582 263 576 261L400 214C394 212 391 208 391 202L389 132C389 126 391 123 396 124Z" fill="url(#ph)"/>
<path d="M580 165C586 167 588 170 588 176L586 254C586 260 582 263 576 261L579 250L581 178Z" fill="#5d5a54"/>
<path d="M392 124L584 166" stroke="#29292b" stroke-width="2.200" fill="none"/>
<rect x="393" y="166" width="46" height="52" rx="11" fill="#bcb8ae" transform="rotate(6 416 192)"/>
<circle cx="412" cy="181" r="9" fill="#8d8981"/><circle cx="412" cy="181" r="5.500" fill="#524f49"/><circle cx="412" cy="181" r="2" fill="#2a2825"/>
<circle cx="403" cy="201" r="9" fill="#8d8981"/><circle cx="403" cy="201" r="5.500" fill="#524f49"/><circle cx="403" cy="201" r="2" fill="#2a2825"/>
<circle cx="425" cy="206" r="9" fill="#8d8981"/><circle cx="425" cy="206" r="5.500" fill="#524f49"/><circle cx="425" cy="206" r="2" fill="#2a2825"/>
<circle cx="430" cy="186" r="2.500" fill="#88a698"/>
<path d="M470 186c4-3 9-2 11 0c3-2 8-1 9 3c2 6-3 12-7 12c-2 0-3-1-4-1c-2 0-3 1-5 1c-5-1-8-10-4-15z" fill="#aaa69d"/>
<path d="M473 228C473 220 486 216 492 220L494 244L524 248L524 232C528 226 540 228 542 236L542 262L476 262Z" fill="#2a2a2c"/>
<path d="M476 226C480 220 488 219 492 222L492 230L478 232Z" fill="#3c3c3f"/><path d="M526 234C530 229 538 230 541 236L540 242L527 241Z" fill="#3c3c3f"/>
<circle cx="508" cy="252" r="4" fill="#b7b48a"/>
</g>
<rect x="0" y="388.600" width="670" height="1.400" fill="#0f4a12"/>
</svg></div>
    </div>
    <svg class="abs" style="left:13px;top:91px" width="674" height="531" viewBox="0 0 674 531" fill="none" stroke="#c6c6c6" stroke-width="2.250"><path d="M11 1.100H663M11 529.600H663" stroke-dasharray="10 5"/><path d="M1.100 11V519.500M672.900 11V519.500" stroke-dasharray="10 5"/><path d="M1.100 11.200V8.800A7.700 7.700 0 0 1 8.800 1.100H11.200M662.800 1.100H665.200A7.700 7.700 0 0 1 672.900 8.800V11.200M672.900 519.300V521.900A7.700 7.700 0 0 1 665.200 529.600H662.800M11.200 529.600H8.800A7.700 7.700 0 0 1 1.100 521.900V519.300"/></svg>
    <div class="abs" style="left:0;top:634.500px;width:699px;height:1px;background:#eceefa"></div>
    <span class="lab" style="left:246.300px;top:641.200px">Original</span>
    <span class="lab" style="left:338px;top:641.200px;letter-spacing:-0.420px">AI Processed Result</span>
    <div class="abs" id="thA"><svg class="abs" style="left:0.800px;top:14.200px" width="67.400" height="40.500" viewBox="0 0 670 390" preserveAspectRatio="none"><use href="#photosvg"/></svg></div>
    <div class="abs" id="thB"><span>Waiting for processing</span></div>
  </div>
  <div id="right">
    <div class="abs" id="rscroll">
      <div class="gb" style="left:15.500px;top:1.500px;width:305px;height:233px"></div>
      <div class="abs" style="left:121px;top:0.500px;width:1.500px;height:2.300px;background:#3a3a3a"></div>
      <div class="ob sel" style="left:27.300px;top:28px;width:134.700px;height:54.500px">Remove BG</div>
      <div class="ob" style="left:175.300px;top:28px;width:133px">Enhance</div>
      <div class="ob" style="left:27.300px;top:98px;width:134.700px">Watermark</div>
      <div class="ob" style="left:175.300px;top:98px;width:133px">Upscale</div>
      <div class="ob" style="left:27.300px;top:168px;width:134.700px">Artistic</div>
      <div class="ob" style="left:175.300px;top:168px;width:133px">Custom</div>
      <div class="gb" style="left:15.500px;top:275.500px;width:305px;height:399px"></div>
      <div class="gt" style="left:36px;top:255px;width:112px"></div>
      <svg class="abs" style="left:49px;top:258px" width="17" height="16" viewBox="0 0 17 16"><path d="M1.500 0H15.500Q17 0 17 1.500V14.500Q17 16 15.500 16H1.500Q0 16 0 14.500V1.500Q0 0 1.500 0Z" fill="#3b2a6a"/><rect x="3" y="0" width="10.500" height="5" fill="#f1eef6"/><rect x="9.600" y="0.600" width="2.400" height="3.800" fill="#3b2a6a"/><rect x="2.400" y="7.600" width="12.200" height="3" fill="#e8305e"/><rect x="2.400" y="10.600" width="12.200" height="5.400" fill="#d9c8ee"/></svg><span class="gtt" style="left:74.400px;top:257.600px">Settings</span>
      <span class="fl" style="left:27.300px;top:303.500px;letter-spacing:-0.100px">Output Size</span>
      <div class="sel2" style="left:27px;top:333px;width:281px;height:59px"><span>Original Size</span></div>
      <span class="fl" style="left:27.300px;top:406.300px;letter-spacing:0.100px">Output Format</span>
      <div class="sel2" style="left:27px;top:435px;width:281px;height:59px"><span>PNG</span></div>
      <span class="fl" style="left:27.300px;top:508.400px;letter-spacing:-0.700px">Save Path</span>
      <div class="sel2" style="left:27px;top:538px;width:171px;height:58px"><div class="abs" style="left:16.500px;top:10px;width:140px;height:40px;overflow:hidden"><span style="left:auto;right:7.200px;top:9.800px;font-size:16.500px;letter-spacing:0">ownloads/converted</span></div></div>
      <div class="ob" style="left:209px;top:540px;width:99px;height:53px;line-height:52px">Browse</div>
      <span class="fl" style="left:27.300px;top:610.300px">Image Quality</span>
      <div class="abs" style="left:27px;top:646px;width:200px;height:8px;border-radius:4px;background:#e4e7fb"></div>
      <div class="abs" style="left:206px;top:639px;width:25px;height:22px;border-radius:10px;background:linear-gradient(90deg,#667eea,#764ba2)"></div>
      <span class="abs" style="left:240px;top:642.200px;width:68px;text-align:right;font-size:17px;color:#667eea;line-height:19px;letter-spacing:-0.900px">100%</span>
    </div>
    <div class="abs" style="left:336px;top:266px;width:13px;height:503px;background:#b5c0e0"></div>
    <div class="abs" style="left:0;top:0;width:1px;height:772px;background:#dde0f8"></div>
    <div class="hdr" style="left:0;top:0;width:351px">
      <svg class="abs" style="left:31.700px;top:26.700px" width="20" height="20" viewBox="0 0 20 20"><defs><radialGradient id="gg" cx="0.400" cy="0.350" r="0.700"><stop offset="0" stop-color="#d9d0e4"/><stop offset="1" stop-color="#a796c4"/></radialGradient></defs><path d="M9.06 0.45L10.94 0.45L12.09 3.11L13.39 3.65L16.09 2.58L17.42 3.91L16.35 6.61L16.89 7.91L19.55 9.06L19.55 10.94L16.89 12.09L16.35 13.39L17.42 16.09L16.09 17.42L13.39 16.35L12.09 16.89L10.94 19.55L9.06 19.55L7.91 16.89L6.61 16.35L3.91 17.42L2.58 16.09L3.65 13.39L3.11 12.09L0.45 10.94L0.45 9.06L3.11 7.91L3.65 6.61L2.58 3.91L3.91 2.58L6.61 3.65L7.91 3.11Z" fill="url(#gg)" stroke="url(#gg)" stroke-width="1.600" stroke-linejoin="round"/><circle cx="10" cy="10" r="3.100" fill="#ece8f5"/><circle cx="10" cy="10" r="4.600" fill="none" stroke="#9f8fba" stroke-width="0.800" opacity="0.600"/></svg><span class="ht" style="left:62px;top:26.500px;letter-spacing:0.550px">Settings</span>
    </div>
  </div>
  <div id="footer">
    <span class="abs" style="left:37.500px;top:37px;font-size:16px;color:#929298;white-space:nowrap;line-height:18px;letter-spacing:-0.080px">Processing 0 of 0 images (0% complete)</span>
    <div class="abs" style="left:38px;top:77px;width:500px;height:9px;border-radius:5px;background:#dcdff5"></div>
    <div class="fb" style="left:928px;background:linear-gradient(90deg,#11998e,#38ef7d)">Start</div>
    <div class="fb" style="left:1070px;background:linear-gradient(90deg,#667eea,#764ba2);letter-spacing:-0.800px">Pause</div>
    <div class="fb" style="left:1213px;background:linear-gradient(90deg,#eb3349,#f45c43)">Stop</div>
  </div>
</div>
<svg id="nums" class="abs" style="left:0;top:0;pointer-events:none" width="1509" height="1017" viewBox="0 0 1509 1017">
  <defs><filter id="nsh" x="-30%" y="-30%" width="170%" height="170%"><feGaussianBlur in="SourceAlpha" stdDeviation="1.200"/><feOffset dx="1.600" dy="1.600" result="o"/><feComponentTransfer><feFuncA type="linear" slope="0.750"/></feComponentTransfer><feMerge><feMergeNode/><feMergeNode in="SourceGraphic"/></feMerge></filter></defs>
  <g font-family="Liberation Sans" font-weight="bold" font-size="40" fill="#ff0000" stroke="#fff" stroke-width="6" stroke-linejoin="round" paint-order="stroke" filter="url(#nsh)">
    <path transform="translate(1241.600 513.900) scale(1.040 1)" d="M15.64 -0.00H10.16V-20.68Q7.15 -17.87 3.07 -16.52V-21.50Q5.21 -22.21 7.73 -24.17Q10.25 -26.13 11.19 -28.75H15.64Z"/>
    <text x="1251.300" y="615.900">2</text>
    <text x="1250.800" y="720.800">3</text>
    <text x="1252.200" y="823.800">4</text>
  </g>
</svg>
</body>
</html>
